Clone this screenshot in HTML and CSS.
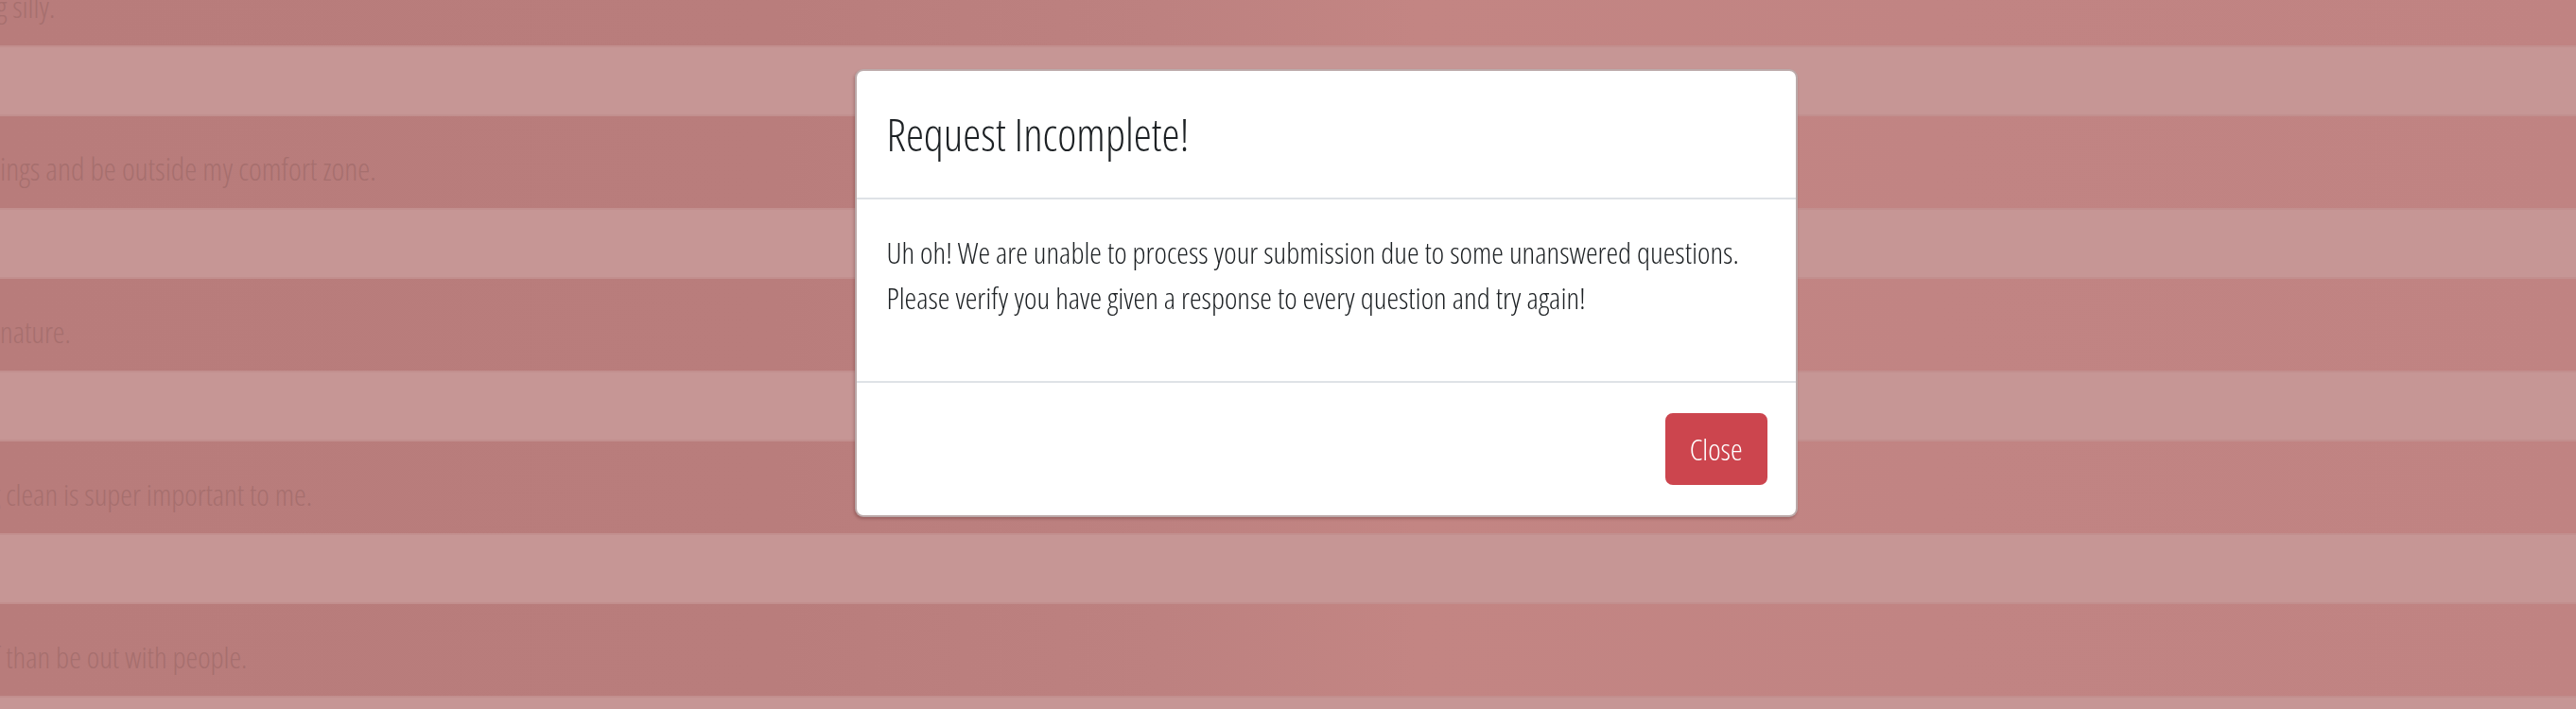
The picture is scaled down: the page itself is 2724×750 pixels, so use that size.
FILE: index.html
```html
<!DOCTYPE html>
<html lang="en">
<head>
<meta charset="utf-8">
<title>Request Incomplete</title>
<link rel="stylesheet" href="styles.css">
</head>
<body>
<main class="survey">
  <div class="row row-q"><span class="label cut-g">g silly.</span></div>
  <div class="row row-a"></div>
  <div class="row row-q"><span class="label cut-i">ings and be outside my comfort zone.</span></div>
  <div class="row row-a"></div>
  <div class="row row-q"><span class="label cut-n">nature.</span></div>
  <div class="row row-a"></div>
  <div class="row row-q"><span class="label cut-g2">g clean is super important to me.</span></div>
  <div class="row row-a"></div>
  <div class="row row-q"><span class="label cut-f">f than be out with people.</span></div>
  <div class="row row-a"></div>
</main>

<div class="modal-layer">
  <div class="modal" role="dialog" aria-labelledby="modal-title">
    <div class="modal-header">
      <h5 class="modal-title" id="modal-title">Request Incomplete!</h5>
    </div>
    <div class="modal-body">
      <p>Uh oh! We are unable to process your submission due to some unanswered questions.<br>Please verify you have given a response to every question and try again!</p>
    </div>
    <div class="modal-footer">
      <button class="btn-close" type="button">Close</button>
    </div>
  </div>
</div>
</body>
</html>
```
FILE: styles.css
```css
* { box-sizing: border-box; }

html, body {
  margin: 0;
  height: 100%;
  overflow: hidden;
}

body {
  font-family: "Open Sans", "Noto Sans", sans-serif;
  font-weight: 300;
  font-stretch: 75%;
  background: #b97d7c;
}

.survey {
  display: flex;
  flex-direction: column;
  margin-top: -49px;
}

.row {
  flex: none;
  overflow: hidden;
  white-space: nowrap;
}

.row-q {
  height: 97px;
  padding-top: 32px;
  background: linear-gradient(90deg, #b87c7b 0%, #b97d7c 30%, #bd8180 45%, #c38583 55%, #c18483 75%, #c08382 100%);
}

.row-a {
  height: 75px;
  background: #c69695;
  border-top: 2px solid #c28f8e;
  border-bottom: 2px solid #c28f8e;
}

.label {
  display: block;
  font-size: 32px;
  line-height: 48px;
  color: #a66f6e;
}

.cut-g { margin-left: -4px; }
.cut-i { margin-left: 0; font-size: 32.8px; }
.cut-n { margin-left: 0; }
.cut-g2 { margin-left: -11px; }
.cut-f { margin-left: -7px; }

.modal-layer {
  position: fixed;
  inset: 0;
  display: flex;
  justify-content: center;
  align-items: flex-start;
  padding: 73px 0 0 80px;
}

.modal {
  width: 997px;
  background: #fff;
  border: 2px solid rgba(60, 10, 10, 0.35);
  border-radius: 9px;
  box-shadow: -1px 2px 3px rgba(60, 10, 10, 0.25);
  color: #1d2124;
  display: flex;
  flex-direction: column;
}

.modal-header {
  padding: 32px;
  border-bottom: 2px solid #dee2e6;
}

.modal-title {
  margin: 0;
  font-size: 48px;
  font-weight: 300;
  line-height: 70px;
}

.modal-body {
  padding: 32px;
}

.modal-body p {
  margin: 0 0 32px;
  font-size: 32px;
  font-weight: 320;
  line-height: 48px;
}

.modal-footer {
  display: flex;
  justify-content: flex-end;
  padding: 32px 30px 32px 32px;
  border-top: 2px solid #dee2e6;
}

.btn-close {
  font-family: inherit;
  font-weight: 300;
  font-stretch: 75%;
  font-size: 32px;
  line-height: 48px;
  padding: 12px 24px;
  border: 2px solid #cc454e;
  border-radius: 8px;
  background: #cc454e;
  color: #fff;
}
```
